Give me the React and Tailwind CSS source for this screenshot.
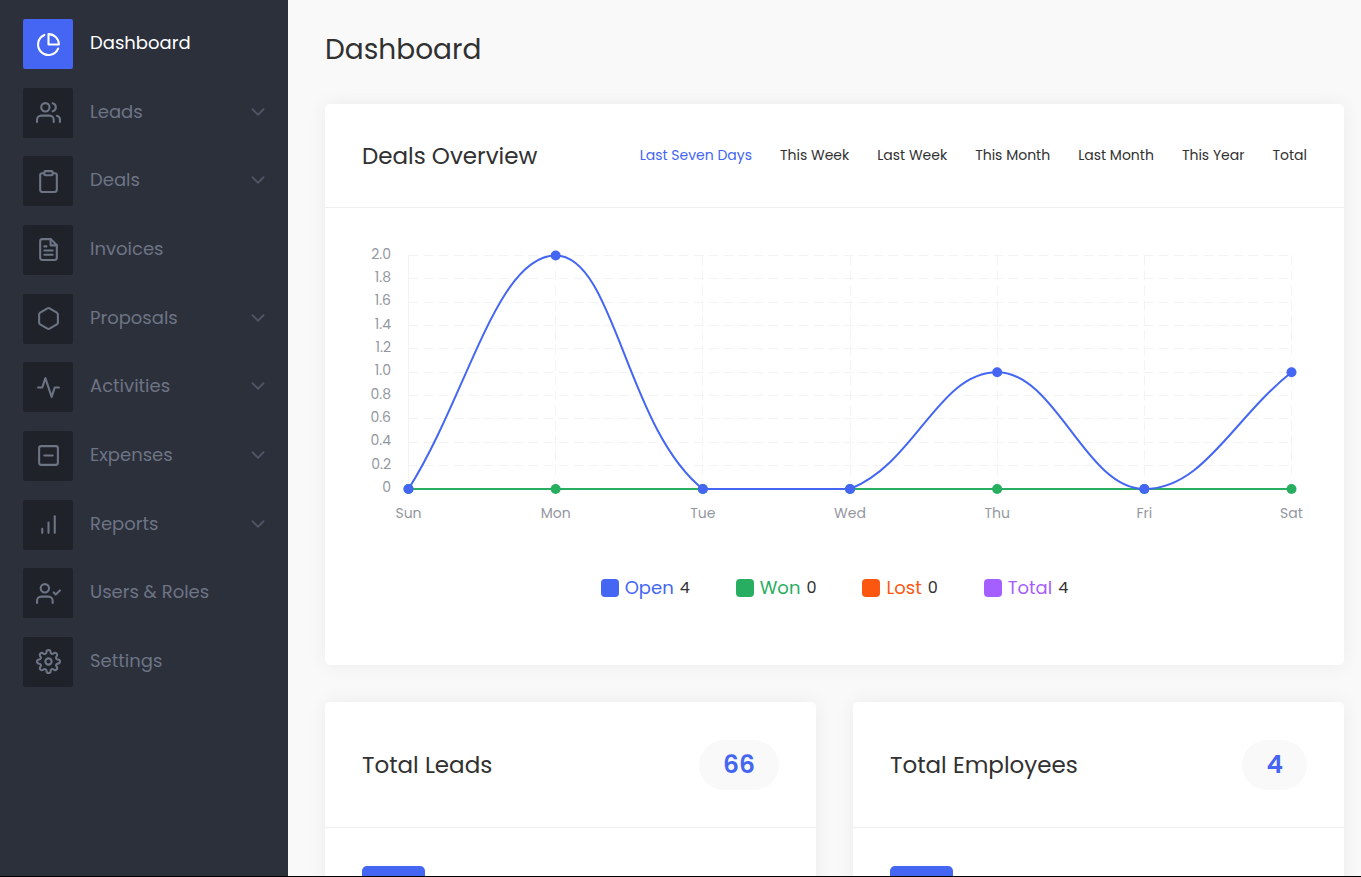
import { useState } from "react";
import {
  FiActivity,
  FiBarChart,
  FiChevronDown,
  FiClipboard,
  FiFileText,
  FiHexagon,
  FiMinusSquare,
  FiPieChart,
  FiSettings,
  FiUserCheck,
  FiUsers,
} from "react-icons/fi";

const menu = [
  { label: "Dashboard", icon: FiPieChart, active: true },
  { label: "Leads", icon: FiUsers, children: true },
  { label: "Deals", icon: FiClipboard, children: true },
  { label: "Invoices", icon: FiFileText },
  { label: "Proposals", icon: FiHexagon, children: true },
  { label: "Activities", icon: FiActivity, children: true },
  { label: "Expenses", icon: FiMinusSquare, children: true },
  { label: "Reports", icon: FiBarChart, children: true },
  { label: "Users & Roles", icon: FiUserCheck },
  { label: "Settings", icon: FiSettings },
];

const ranges = [
  "Last Seven Days",
  "This Week",
  "Last Week",
  "This Month",
  "Last Month",
  "This Year",
  "Total",
];

const legend = [
  { label: "Open", value: 4, box: "bg-[#4466f2]", text: "text-[#4466f2]" },
  { label: "Won", value: 0, box: "bg-[#27ae60]", text: "text-[#27ae60]" },
  { label: "Lost", value: 0, box: "bg-[#fc5710]", text: "text-[#fc5710]" },
  { label: "Total", value: 4, box: "bg-[#a55eff]", text: "text-[#a55eff]" },
];

const days = ["Sun", "Mon", "Tue", "Wed", "Thu", "Fri", "Sat"];
const openDeals = [0, 2, 0, 0, 1, 0, 1];
const ticks = ["2.0", "1.8", "1.6", "1.4", "1.2", "1.0", "0.8", "0.6", "0.4", "0.2", "0"];

// plot area inside the 945 x 288 chart
const area = { left: 46.5, right: 929.5, top: 10.5, bottom: 244 };
const px = (i) => area.left + (i * (area.right - area.left)) / 6;
const py = (v) => area.bottom - (v * (area.bottom - area.top)) / 2;

// smooth line through the points, control points kept inside the plot area
const curvePath = (values, tension = 0.4) => {
  const pts = values.map((v, i) => ({ x: px(i), y: py(v) }));
  const clampY = (y) => Math.min(area.bottom, Math.max(area.top, y));
  const ctrl = pts.map((cur, i) => {
    const prev = pts[i - 1] || cur;
    const next = pts[i + 1] || cur;
    const d1 = Math.hypot(cur.x - prev.x, cur.y - prev.y);
    const d2 = Math.hypot(next.x - cur.x, next.y - cur.y);
    const a = (tension * d1) / (d1 + d2);
    const b = (tension * d2) / (d1 + d2);
    return {
      in: [cur.x - a * (next.x - prev.x), clampY(cur.y - a * (next.y - prev.y))],
      out: [cur.x + b * (next.x - prev.x), clampY(cur.y + b * (next.y - prev.y))],
    };
  });
  return pts
    .map((p, i) =>
      i === 0 ? `M${p.x} ${p.y}` : `C${ctrl[i - 1].out} ${ctrl[i].in} ${p.x} ${p.y}`
    )
    .join(" ");
};

const Sidebar = () => (
  <aside className="w-72 shrink-0 bg-[#2c303b] px-[23px] pt-[19px]">
    <nav className="flex h-[668px] flex-col justify-between">
      {menu.map(({ label, icon: Icon, active, children }) => (
        <a key={label} href="#" className="flex items-center">
          <span
            className={`flex h-[50px] w-[50px] items-center justify-center rounded-xs ${
              active ? "bg-[#4466f2] text-white" : "bg-[#1f2329] text-[#6d7485]"
            }`}
          >
            <Icon size={25} />
          </span>
          <span
            className={`ml-[17px] flex flex-1 items-center justify-between pb-[2px] text-[18px] leading-6 ${
              active ? "text-white" : "text-[#6d7485]"
            }`}
          >
            {label}
            {children && <FiChevronDown size={22} className="-mr-1 text-[#505566]" />}
          </span>
        </a>
      ))}
    </nav>
  </aside>
);

const DealsChart = () => (
  <svg viewBox="0 0 945 288" className="block w-full" role="img" aria-label="Deals per day">
    <g stroke="#f3f3f5" strokeDasharray="10 5">
      {ticks.slice(0, -1).map((t, i) => {
        const y = Math.floor(py(2 - i * 0.2)) + 0.5;
        return <line key={t} x1={area.left} x2={area.right} y1={y} y2={y} />;
      })}
      {days.map((d, i) => {
        const x = Math.floor(px(i)) + 0.5;
        return <line key={d} x1={x} x2={x} y1={area.top} y2={area.bottom} />;
      })}
      <line x1={area.left} x2={area.left} y1={area.top} y2={area.bottom} strokeDasharray="none" />
    </g>
    <g className="fill-[#9397a0] text-[14px]">
      {ticks.map((t, i) => (
        <text key={t} x="29" y={py(2 - i * 0.2) + 3} textAnchor="end">
          {t}
        </text>
      ))}
      {days.map((d, i) => (
        <text key={d} x={px(i)} y="273" textAnchor="middle">
          {d}
        </text>
      ))}
    </g>
    <line
      x1={area.left}
      x2={area.right}
      y1={area.bottom}
      y2={area.bottom}
      stroke="#27ae60"
      strokeWidth="2"
    />
    {days.map((d, i) => (
      <circle key={d} cx={px(i)} cy={area.bottom} r="5" fill="#27ae60" />
    ))}
    <path d={curvePath(openDeals)} fill="none" stroke="#4466f2" strokeWidth="2" />
    {openDeals.map((v, i) => (
      <circle key={days[i]} cx={px(i)} cy={py(v)} r="5" fill="#4466f2" />
    ))}
  </svg>
);

const StatCard = ({ title, value }) => (
  <section className="flex-1 rounded-[5px] bg-white shadow-[0_0_20px_rgba(0,0,0,0.06)]">
    <div className="flex h-[126px] items-center justify-between border-b border-[#efefef] px-[37px]">
      <h2 className="text-[23px] leading-9">{title}</h2>
      <span className="rounded-[25px] bg-[#f9f9fa] px-6 text-[25px] leading-[50px] font-semibold text-[#4466f2]">
        {value}
      </span>
    </div>
    <div className="px-[37px] pt-[38px]">
      <div className="h-[63px] w-[63px] rounded-[5px] bg-[#4466f2]" />
    </div>
  </section>
);

const App = () => {
  const [range, setRange] = useState("Last Seven Days");

  return (
    <div className="flex h-screen overflow-hidden border-b border-black bg-[#f9f9f9] font-['Poppins','Inter',sans-serif] text-[#313131]">
      <Sidebar />
      <main className="min-w-0 flex-1 pt-8 pr-[17px] pl-[37px]">
        <h1 className="text-[28px] leading-9">Dashboard</h1>

        <section className="mt-9 rounded-[5px] bg-white shadow-[0_0_20px_rgba(0,0,0,0.06)]">
          <div className="flex h-[104px] items-center justify-between border-b border-[#efefef] px-[37px]">
            <h2 className="text-[23px] leading-9">Deals Overview</h2>
            <div className="flex gap-7 text-[14px]">
              {ranges.map((r) => (
                <button
                  key={r}
                  type="button"
                  onClick={() => setRange(r)}
                  className={`cursor-pointer ${r === range ? "text-[#4466f2]" : ""}`}
                >
                  {r}
                </button>
              ))}
            </div>
          </div>
          <div className="px-[37px] pt-[37px] pb-[65px]">
            <DealsChart />
            <ul className="mt-[43px] flex justify-center gap-[46px]">
              {legend.map(({ label, value, box, text }) => (
                <li key={label} className="flex items-center gap-[6px] leading-6">
                  <span className={`h-[18px] w-[18px] rounded-[4px] ${box}`} />
                  <span className={`text-[18px] ${text}`}>{label}</span>
                  <span className="text-[16px]">{value}</span>
                </li>
              ))}
            </ul>
          </div>
        </section>

        <div className="mt-[37px] flex gap-[37px]">
          <StatCard title="Total Leads" value={66} />
          <StatCard title="Total Employees" value={4} />
        </div>
      </main>
    </div>
  );
};

export default App;
